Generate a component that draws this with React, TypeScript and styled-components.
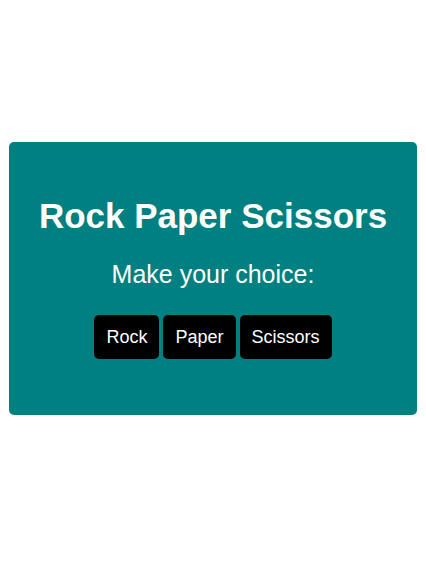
import React from "react";
import styled, { createGlobalStyle } from "styled-components";

const GlobalStyle = createGlobalStyle`
  html, body {
    margin: 0;
    padding: 0;
    background: #ffffff;
  }
  body {
    font-family: "Liberation Sans", Arial, sans-serif;
  }
`;

const Page = styled.div`
  padding: 142px 9px 0;
`;

const Card = styled.div`
  background: #008080;
  color: #ffffff;
  border-radius: 5px;
  padding: 54px 20px 56px;
  text-align: center;
`;

const Title = styled.h1`
  font-size: 35px;
  font-weight: bold;
  line-height: 1.15;
  margin: 0 0 24px;
`;

const Prompt = styled.p`
  font-size: 25px;
  line-height: 1.15;
  margin: 0 0 26px;
`;

const Choices = styled.div`
  display: flex;
  justify-content: center;
  gap: 4px;
`;

const ChoiceButton = styled.button`
  background: #000000;
  color: #ffffff;
  border: none;
  border-radius: 5px;
  font-family: "Liberation Sans", Arial, sans-serif;
  font-size: 18px;
  line-height: 20px;
  padding: 12px 12px;
  cursor: pointer;
`;

export default function App() {
  const choices = ["Rock", "Paper", "Scissors"];
  return (
    <>
      <GlobalStyle />
      <Page>
        <Card>
          <Title>Rock Paper Scissors</Title>
          <Prompt>Make your choice:</Prompt>
          <Choices>
            {choices.map((c) => (
              <ChoiceButton key={c}>{c}</ChoiceButton>
            ))}
          </Choices>
        </Card>
      </Page>
    </>
  );
}
